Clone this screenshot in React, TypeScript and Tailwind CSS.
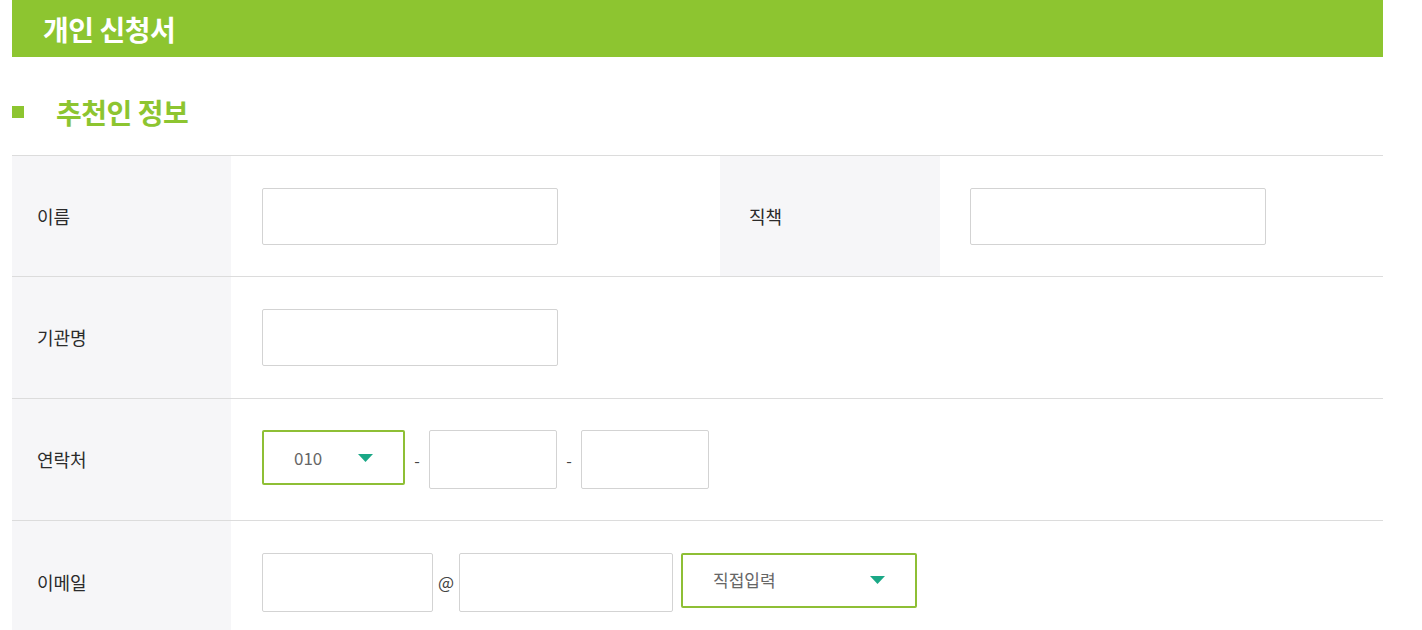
const font = { fontFamily: '"Noto Sans CJK KR", "Noto Sans", sans-serif' };

function TextBox({ w, h = "h-[57px]" }: { w: string; h?: string }) {
  return <input type="text" className={`${w} ${h} rounded-[2px] border border-[#d3d3d3] bg-white outline-none`} />;
}

function SelectBox({ w, value }: { w: string; value: string }) {
  return (
    <div
      className={`${w} h-[55px] flex items-center justify-between pl-[30px] pr-[30px] border-2 border-[#8ebf35] rounded-[2px] bg-white text-[17px] text-[#666]`}
    >
      <span>{value}</span>
      <svg width="15" height="8" viewBox="0 0 15 8">
        <path d="M0 0 L15 0 L7.5 8 Z" fill="#1aa886" />
      </svg>
    </div>
  );
}

function Label({ children }: { children: string }) {
  return (
    <div className="w-[219px] shrink-0 bg-[#f6f6f8] flex items-center pl-[25px] text-[18px] text-[#2b2b2b]">
      {children}
    </div>
  );
}

export default function App() {
  return (
    <div className="w-full min-h-[630px] bg-white pl-[12px] pr-[39px]" style={font}>
      <div className="h-[57px] bg-[#8dc530] flex items-center pl-[31px]">
        <h1 className="text-[28px] font-bold text-white tracking-[-0.5px]">개인 신청서</h1>
      </div>

      <div className="h-[98px] pt-[12px] flex items-center">
        <span className="w-[12px] h-[12px] bg-[#8dc530]" />
        <h2 className="ml-[32px] text-[28px] font-bold text-[#8dc530] tracking-[-0.5px]">추천인 정보</h2>
      </div>

      <div className="border-t border-[#dcdcdc]">
        <div className="flex h-[121px] border-b border-[#dcdcdc]">
          <Label>이름</Label>
          <div className="w-[489px] flex items-center pl-[31px]">
            <TextBox w="w-[296px]" />
          </div>
          <div className="w-[220px] shrink-0 bg-[#f6f6f8] flex items-center pl-[29px] text-[18px] text-[#2b2b2b]">
            직책
          </div>
          <div className="flex-1 flex items-center pl-[30px]">
            <TextBox w="w-[296px]" />
          </div>
        </div>

        <div className="flex h-[122px] border-b border-[#dcdcdc]">
          <Label>기관명</Label>
          <div className="flex-1 flex items-center pl-[31px]">
            <TextBox w="w-[296px]" />
          </div>
        </div>

        <div className="flex h-[122px] border-b border-[#dcdcdc]">
          <Label>연락처</Label>
          <div className="flex-1 flex items-center pl-[31px]">
            <div className="flex items-start">
              <SelectBox w="w-[143px]" value="010" />
              <span className="w-[24px] h-[59px] flex items-center justify-center text-[16px] text-[#444]">-</span>
              <TextBox w="w-[128px]" h="h-[59px]" />
              <span className="w-[24px] h-[59px] flex items-center justify-center text-[16px] text-[#444]">-</span>
              <TextBox w="w-[128px]" h="h-[59px]" />
            </div>
          </div>
        </div>

        <div className="flex h-[122px]">
          <Label>이메일</Label>
          <div className="flex-1 flex items-center pl-[31px]">
            <div className="flex items-start">
              <TextBox w="w-[171px]" h="h-[59px]" />
              <span className="w-[26px] h-[59px] flex items-center justify-center text-[17px] text-[#444]">@</span>
              <TextBox w="w-[214px]" h="h-[59px]" />
              <div className="ml-[8px]">
                <SelectBox w="w-[236px]" value="직접입력" />
              </div>
            </div>
          </div>
        </div>
      </div>
    </div>
  );
}
